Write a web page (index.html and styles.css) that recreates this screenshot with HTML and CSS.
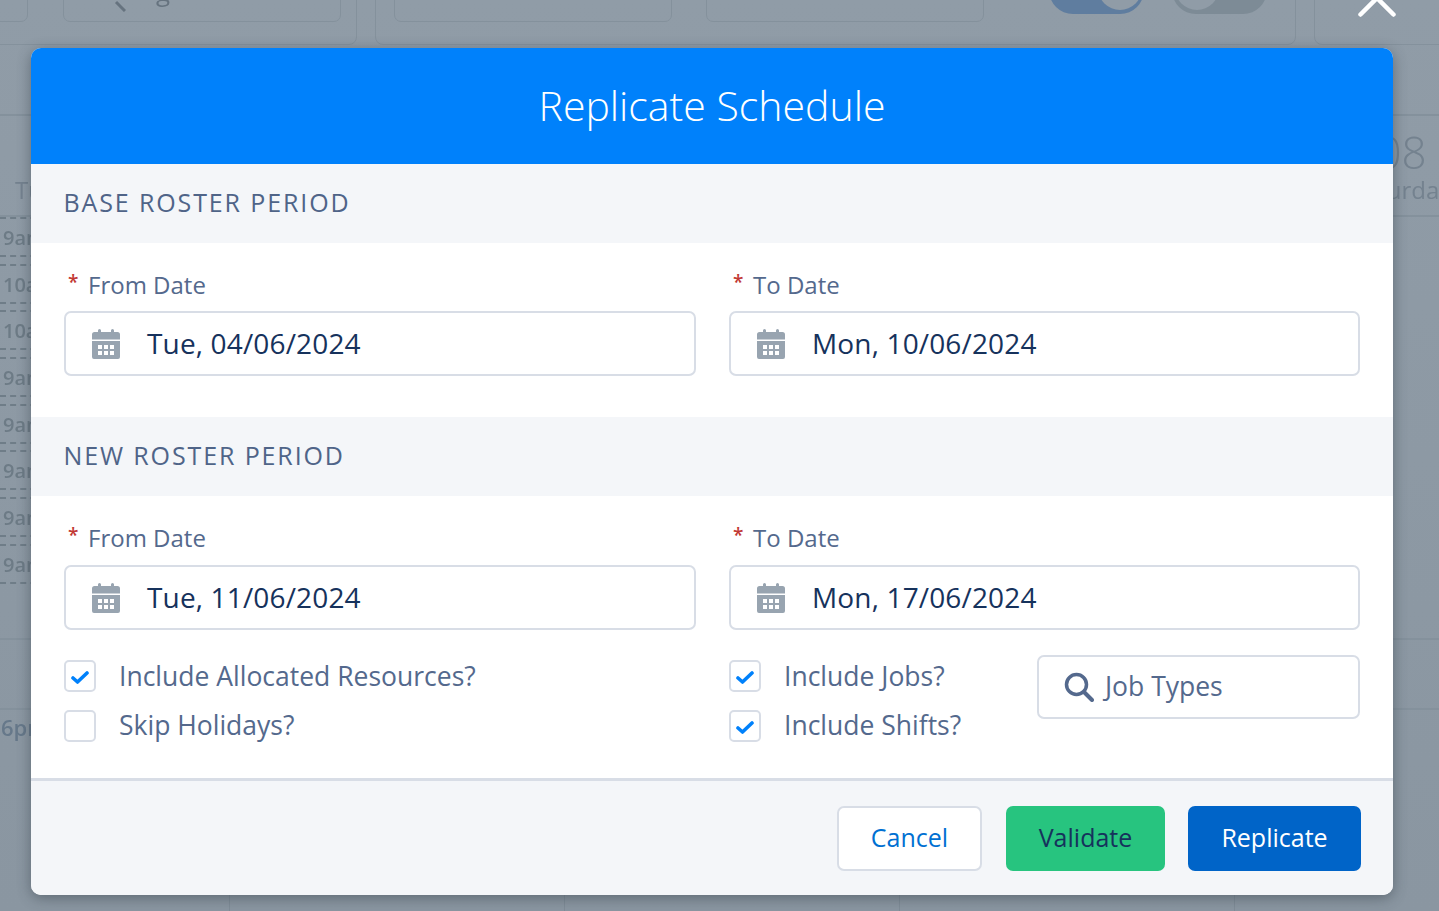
FILE: index.html
```html
<!DOCTYPE html>
<html lang="en">
<head>
<meta charset="utf-8">
<title>Replicate Schedule</title>
<link rel="stylesheet" href="styles.css">
</head>
<body>
<svg class="defs" width="0" height="0" aria-hidden="true">
  <symbol id="cal" viewBox="0 0 28 30">
    <path d="M6 3V1.500a1.500 1.500 0 0 1 3 0V3h10V1.500a1.500 1.500 0 0 1 3 0V3h3.500A2.500 2.500 0 0 1 28 5.500V10.500H0V5.500A2.500 2.500 0 0 1 2.500 3z"/>
    <path fill-rule="evenodd" d="M0 12h28v16a2 2 0 0 1-2 2H2a2 2 0 0 1-2-2zM6 16v4h4v-4zM12 16v4h4v-4zM18 16v4h4v-4zM6 22v4h4v-4zM12 22v4h4v-4zM18 22v4h4v-4z"/>
  </symbol>
  <symbol id="tick" viewBox="0 0 18 13">
    <path d="M2 7l4.500 4L16 2" fill="none" stroke="#0081fb" stroke-width="3.600" stroke-linecap="round" stroke-linejoin="round"/>
  </symbol>
</svg>

<div class="backdrop">
  <div class="toolbar">
    <div class="panel panel-a">
      <div class="ghost-box ghost-small"></div>
      <div class="ghost-box ghost-wide"><svg class="ghost-search" width="24" height="24" viewBox="0 0 24 24"><path d="M14 14l9 9" stroke="#66737f" stroke-width="3" fill="none"/></svg><span class="ghost-text">g</span></div>
    </div>
    <div class="panel panel-b">
      <div class="ghost-box ghost-wide"></div>
      <div class="ghost-box ghost-wide ghost-gap"></div>
      <div class="toggle toggle-on"></div>
      <div class="toggle toggle-off"></div>
    </div>
    <div class="panel panel-c">
      <svg class="close" width="38" height="20" viewBox="0 0 38 20"><path d="M2.500 17.500L19 1l16.500 16.500" fill="none" stroke="#fff" stroke-width="4.500" stroke-linecap="round"/></svg>
    </div>
  </div>
  <div class="day-head">
    <div class="day"><div class="day-num"></div><div class="day-name">Tuesday</div></div>
    <div class="day"></div><div class="day"></div><div class="day"></div>
    <div class="day"><div class="day-num">08</div><div class="day-name">Saturday</div></div>
  </div>
  <div class="roster">
    <div class="shift">9am</div><div class="shift">10am</div><div class="shift">10am</div><div class="shift">9am</div>
    <div class="shift">9am</div><div class="shift">9am</div><div class="shift">9am</div><div class="shift">9am</div>
  </div>
  <div class="band"></div>
  <div class="lower">
    <div class="lower-col"><span class="lower-time">6pm</span></div>
    <div class="lower-col"></div><div class="lower-col"></div><div class="lower-col"></div><div class="lower-col"></div>
  </div>
</div>

<section class="modal">
  <h1 class="modal-title">Replicate Schedule</h1>

  <h2 class="section-title">BASE ROSTER PERIOD</h2>
  <div class="section-body">
    <div class="two-col">
      <div class="field">
        <div class="field-label"><span class="req">*</span>From Date</div>
        <div class="date-input"><svg class="cal-icon"><use href="#cal"/></svg><span>Tue, 04/06/2024</span></div>
      </div>
      <div class="field">
        <div class="field-label"><span class="req">*</span>To Date</div>
        <div class="date-input"><svg class="cal-icon"><use href="#cal"/></svg><span>Mon, 10/06/2024</span></div>
      </div>
    </div>
  </div>

  <h2 class="section-title">NEW ROSTER PERIOD</h2>
  <div class="section-body section-body-new">
    <div class="two-col">
      <div class="field">
        <div class="field-label"><span class="req">*</span>From Date</div>
        <div class="date-input"><svg class="cal-icon"><use href="#cal"/></svg><span>Tue, 11/06/2024</span></div>
      </div>
      <div class="field">
        <div class="field-label"><span class="req">*</span>To Date</div>
        <div class="date-input"><svg class="cal-icon"><use href="#cal"/></svg><span>Mon, 17/06/2024</span></div>
      </div>
    </div>
    <div class="two-col options">
      <div class="checks">
        <div class="check"><span class="box"><svg class="tick"><use href="#tick"/></svg></span>Include Allocated Resources?</div>
        <div class="check"><span class="box"></span>Skip Holidays?</div>
      </div>
      <div class="options-right">
        <div class="checks">
          <div class="check"><span class="box"><svg class="tick"><use href="#tick"/></svg></span>Include Jobs?</div>
          <div class="check"><span class="box"><svg class="tick"><use href="#tick"/></svg></span>Include Shifts?</div>
        </div>
        <div class="search-input">
          <svg class="search-icon" viewBox="0 0 30 30"><circle cx="12.500" cy="12.500" r="10" fill="none" stroke="#54698d" stroke-width="3.500"/><path d="M20 20l8 8" stroke="#54698d" stroke-width="4" stroke-linecap="round"/></svg>
          <span>Job Types</span>
        </div>
      </div>
    </div>
  </div>

  <div class="modal-footer">
    <button class="btn btn-cancel">Cancel</button>
    <button class="btn btn-validate">Validate</button>
    <button class="btn btn-replicate">Replicate</button>
  </div>
</section>
</body>
</html>
```
FILE: styles.css
```css
* { box-sizing: border-box; }
html, body { margin: 0; padding: 0; height: 911px; overflow: hidden; }
body {
  position: relative;
  width: 1439px;
  font-family: "Open Sans", "Noto Sans", sans-serif;
  background: linear-gradient(#909ca7, #8a96a1);
}
.defs { position: absolute; }

/* Dimmed page behind the modal */
.backdrop { height: 911px; overflow: hidden; filter: blur(0.5px); }
.toolbar {
  display: flex;
  gap: 18px;
  height: 45px;
  margin-left: -20px;
  width: 1520px;
}
.panel {
  display: flex;
  height: 100px;
  margin-top: -55px;
  border: 1.5px solid #84919c;
  border-radius: 8px;
  padding-top: 32px;
}
.panel-a { width: 377px; padding-left: 12px; }
.panel-b { width: 921px; padding-left: 18px; }
.panel-c { flex: 1; padding: 55px 0 0 43px; }
.ghost-box {
  height: 53px;
  width: 278px;
  margin-top: -9px;
  border: 1.5px solid #84919c;
  border-radius: 7px;
  position: relative;
}
.ghost-small { width: 35px; margin-right: 35px; }
.ghost-gap { margin-left: 34px; }
.ghost-search { position: absolute; left: 38px; top: 18px; }
.ghost-text { position: absolute; left: 92px; top: 6px; font-size: 26px; line-height: 30px; color: #66737f; }
.toggle { width: 95px; height: 45px; margin-top: -9px; border-radius: 0 0 24px 24px; position: relative; }
.toggle-on { background: #5f7d9f; margin-left: 65px; }
.toggle-off { background: #7d8b96; margin-left: 28px; }
.toggle::after {
  content: "";
  position: absolute;
  top: -3px;
  width: 44px;
  height: 44px;
  border-radius: 50%;
  background: #909ca7;
}
.toggle-on::after { right: 2px; }
.toggle-off::after { left: 3px; }
.close { display: block; margin-top: -4.500px; }

.day-head {
  display: grid;
  grid-template-columns: repeat(5, 335px);
  margin-left: -106px;
  margin-top: 69px;
  height: 103px;
  border-top: 2px solid #84919c;
  border-bottom: 2px solid #84919c;
  width: 1700px;
  text-align: center;
  color: #74828f;
}
.day { padding-top: 13px; }
.day-num { height: 46px; font-size: 44px; line-height: 46px; font-weight: 300; }
.day-name { font-size: 24px; line-height: 30px; margin-top: 0; }

.roster {
  display: flex;
  flex-direction: column;
  gap: 6.700px;
  height: 421px;
}
.shift {
  height: 40px;
  width: 229px;
  padding-left: 3px;
  border-top: 2px dashed #6f7d88;
  border-bottom: 2px dashed #6f7d88;
  font-size: 20px;
  line-height: 38px;
  font-weight: 600;
  color: #6d7b86;
}
.band { height: 70px; border-top: 2px solid #84919c; }
.lower {
  display: grid;
  grid-template-columns: 230px repeat(4, 335px);
  height: 204px;
  border-top: 2px solid #84919c;
}
.lower-col { border-right: 1.500px solid #7f8c97; }
.lower-time { display: block; padding: 2px 0 0 1px; font-size: 22px; line-height: 30px; font-weight: 600; color: #66788a; }

/* Modal */
.modal {
  position: absolute;
  left: 31px;
  top: 48px;
  width: 1362px;
  height: 847px;
  display: flex;
  flex-direction: column;
  background: #fff;
  border-radius: 10px;
  box-shadow: 0 3px 14px rgba(40, 50, 60, .45);
  overflow: hidden;
}
.modal-title {
  flex: none;
  height: 116px;
  margin: 0;
  background: #0081fb;
  color: #fff;
  font-size: 41px;
  font-weight: 300;
  line-height: 114px;
  text-align: center;
}
.section-title {
  flex: none;
  height: 79px;
  margin: 0;
  padding-left: 32.500px;
  background: #f4f6f9;
  color: #4f6488;
  font-size: 25px;
  font-weight: 400;
  line-height: 76px;
  letter-spacing: 1.880px;
}
.section-body { height: 174px; padding: 28px 33px 0; }
.section-body-new { height: 282px; }
.two-col { display: grid; grid-template-columns: 632px 631px; gap: 33px; }
.field-label {
  display: flex;
  height: 28px;
  margin-bottom: 13px;
  color: #54698d;
  font-size: 24px;
  line-height: 28px;
}
.section-body-new .field-label { margin-bottom: 14px; }
.req { width: 24px; padding-left: 4px; color: #c23934; font-size: 19px; font-weight: 600; line-height: 22px; }
.date-input {
  display: flex;
  align-items: center;
  height: 65px;
  margin-top: -1px;
  padding: 0 0 2px 26px;
  background: #fff;
  border: 2px solid #d8dde6;
  border-radius: 7px;
  color: #16325c;
  font-size: 28px;
  letter-spacing: .15px;
}
.cal-icon { width: 28px; height: 30px; margin: 2px 27px 0 0; fill: #98a4b0; }
.options { margin-top: 25px; }
.checks { display: flex; flex-direction: column; gap: 17.500px; padding-top: 5px; }
.check { display: flex; align-items: center; height: 32px; padding-bottom: 1px; color: #54698d; font-size: 26.500px; white-space: nowrap; }
.box {
  flex: none;
  display: flex;
  align-items: center;
  justify-content: center;
  width: 32px;
  height: 32px;
  margin: 1px 23px 0 0;
  border: 2px solid #d8dde6;
  border-radius: 5px;
}
.tick { width: 18px; height: 13px; margin-top: 3px; }
.options-right { display: flex; justify-content: space-between; }
.search-input {
  display: flex;
  align-items: center;
  width: 323px;
  height: 64px;
  padding: 0 0 2px 25px;
  border: 2px solid #d8dde6;
  border-radius: 7px;
  color: #54698d;
  font-size: 26.500px;
}
.search-icon { width: 30px; height: 30px; margin: 2px 11px 0 0; }
.modal-footer {
  flex: 1;
  display: flex;
  justify-content: flex-end;
  gap: 23px;
  padding: 25px 32px 0 0;
  background: #f4f6f9;
  border-top: 3px solid #d8dde6;
}
.btn {
  height: 65px;
  padding: 0 0 3px;
  border-radius: 7px;
  border: 2px solid transparent;
  font-family: inherit;
  font-size: 25px;
}
.btn-cancel { width: 145px; margin-right: 1px; background: #fff; border-color: #d8dde6; color: #0070d2; }
.btn-validate { width: 159px; background: #27c47f; color: #16325c; }
.btn-replicate { width: 173px; background: #0064c8; color: #fff; }
```
